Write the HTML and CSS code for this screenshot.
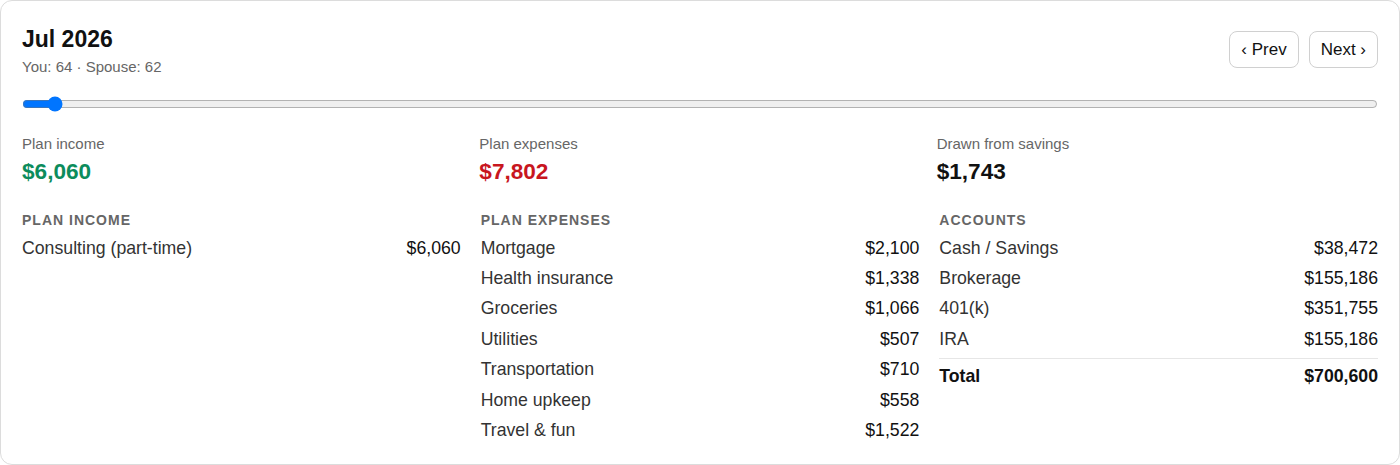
FILE: index.html
```html
<!DOCTYPE html>
<html>
<head>
<meta charset="utf-8">
<link rel="stylesheet" href="styles.css">
</head>
<body>
<div class="card">
  <div class="head">
    <div class="title-block">
      <div class="title">Jul 2026</div>
      <div class="sub">You: 64 · Spouse: 62</div>
    </div>
    <div class="nav">
      <button class="btn">‹ Prev</button>
      <button class="btn">Next ›</button>
    </div>
  </div>
  <input class="slider" type="range" min="0" max="320" value="6">
  <div class="stats">
    <div class="stat">
      <div class="stat-label">Plan income</div>
      <div class="stat-value green">$6,060</div>
    </div>
    <div class="stat">
      <div class="stat-label">Plan expenses</div>
      <div class="stat-value red">$7,802</div>
    </div>
    <div class="stat">
      <div class="stat-label">Drawn from savings</div>
      <div class="stat-value">$1,743</div>
    </div>
  </div>
  <div class="lists">
    <div class="list">
      <div class="list-head">Plan income</div>
      <div class="row"><span>Consulting (part-time)</span><span class="amt">$6,060</span></div>
    </div>
    <div class="list">
      <div class="list-head">Plan expenses</div>
      <div class="row"><span>Mortgage</span><span class="amt">$2,100</span></div>
      <div class="row"><span>Health insurance</span><span class="amt">$1,338</span></div>
      <div class="row"><span>Groceries</span><span class="amt">$1,066</span></div>
      <div class="row"><span>Utilities</span><span class="amt">$507</span></div>
      <div class="row"><span>Transportation</span><span class="amt">$710</span></div>
      <div class="row"><span>Home upkeep</span><span class="amt">$558</span></div>
      <div class="row"><span>Travel &amp; fun</span><span class="amt">$1,522</span></div>
    </div>
    <div class="list">
      <div class="list-head">Accounts</div>
      <div class="row"><span>Cash / Savings</span><span class="amt">$38,472</span></div>
      <div class="row"><span>Brokerage</span><span class="amt">$155,186</span></div>
      <div class="row"><span>401(k)</span><span class="amt">$351,755</span></div>
      <div class="row"><span>IRA</span><span class="amt">$155,186</span></div>
      <div class="row total"><span>Total</span><span class="amt">$700,600</span></div>
    </div>
  </div>
</div>
</body>
</html>
```
FILE: styles.css
```css
* { box-sizing: border-box; }
html, body { margin: 0; padding: 0; background: #fff; }
body { font-family: "Liberation Sans", Arial, sans-serif; color: #111; }
.card {
  width: 1400px;
  height: 465px;
  border: 1px solid #dcdcdc;
  border-radius: 12px;
  padding: 26px 21px 20px 21px;
  display: flex;
  flex-direction: column;
}
.head { display: flex; justify-content: space-between; align-items: flex-start; }
.title { font-size: 23px; font-weight: bold; line-height: 24px; }
.sub { font-size: 15px; color: #666; margin-top: 7px; line-height: 18px; }
.nav { display: flex; gap: 10px; margin-top: 4px; }
.btn {
  font-family: "Liberation Sans", Arial, sans-serif;
  font-size: 17px;
  color: #111;
  background: #fff;
  border: 1px solid #d0d0d0;
  border-radius: 8px;
  height: 37px;
  padding: 0 11px;
}
.slider { width: 100%; margin: 20px 0 0 0; height: 18px; }
.stats { display: grid; grid-template-columns: repeat(3, 1fr); column-gap: 16px; margin-top: 23px; }
.stat-label { font-size: 15px; color: #666; line-height: 18px; }
.stat-value { font-size: 22.6px; font-weight: bold; margin-top: 7px; line-height: 24px; }
.green { color: #0c8c5c; }
.red { color: #c8161e; }
.lists { display: grid; grid-template-columns: repeat(3, 1fr); column-gap: 20px; margin-top: 27px; }
.list-head { font-size: 14px; font-weight: bold; color: #666; text-transform: uppercase; letter-spacing: 1px; line-height: 18px; margin-bottom: 4px; }
.row { display: flex; justify-content: space-between; font-size: 17.7px; line-height: 25.2px; padding: 2.6px 0; color: #333; }
.amt { color: #111; }
.total { border-top: 1px solid #e6e6e6; margin-top: 3px; padding-top: 5px; font-weight: bold; color: #111; }
```
